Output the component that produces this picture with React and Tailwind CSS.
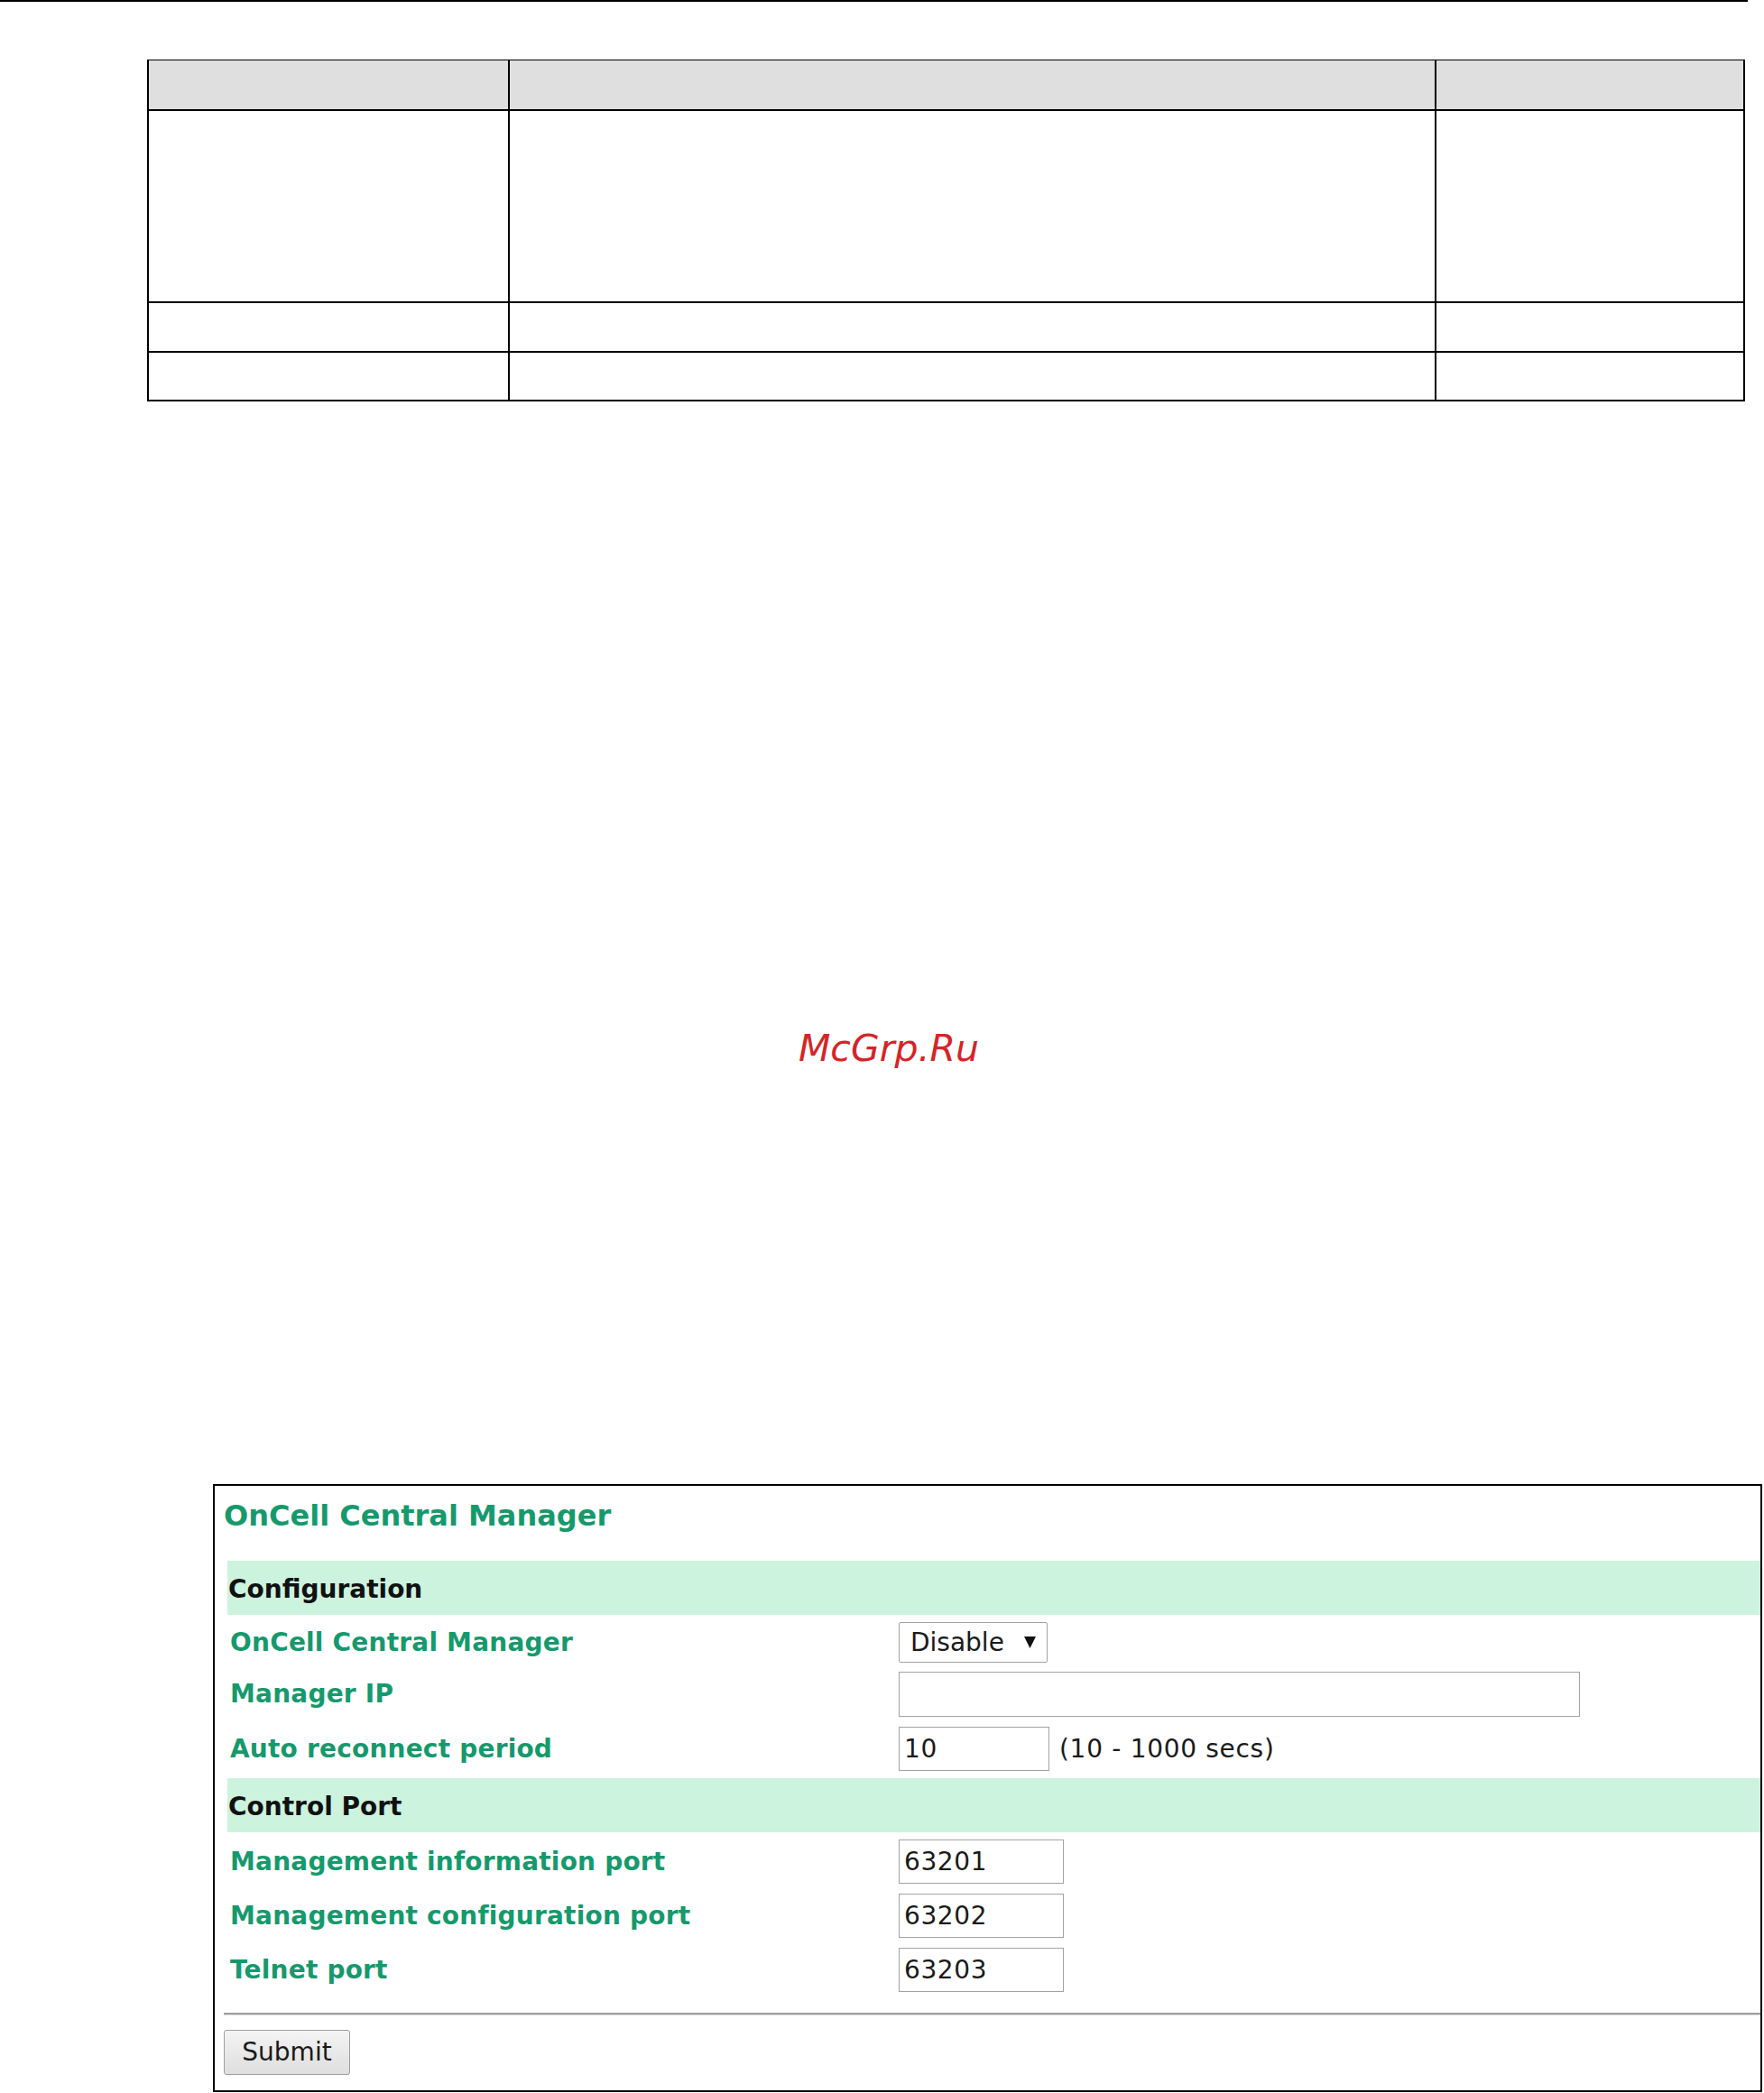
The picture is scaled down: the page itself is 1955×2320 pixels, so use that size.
const green = "text-[#16996c]";

function Row({ label, h, className = "", children }) {
  return (
    <div className={`flex items-center ${className}`} style={{ height: h }}>
      <div className={`w-[744px] pl-[3px] text-[28px] leading-none font-bold tracking-[0.2px] ${green}`}>{label}</div>
      <div className="flex items-center">{children}</div>
    </div>
  );
}

function Field({ value = "", w, h }) {
  return (
    <input
      readOnly
      value={value}
      className="border border-[#a3a3a3] bg-white pl-[5px] text-[28px] tracking-[0.6px] text-[#1a1a1a] outline-none"
      style={{ width: w, height: h }}
    />
  );
}

function Band({ children }) {
  return (
    <div className="ml-[14px] flex h-[60px] items-center bg-[#ccf3de] pl-[1px] pt-[4px] text-[28px] font-bold text-[#111]">
      {children}
    </div>
  );
}

export default function App() {
  return (
    <div className="h-[2320px] w-[1955px] overflow-hidden bg-white font-['DejaVu_Sans',sans-serif]">
      <div className="h-[2px] w-[1937px] bg-black" />

      <div className="ml-[163px] mt-[64px] w-[1771px] border-2 border-t border-black">
        <div className="flex h-[56px] border-b-2 border-black bg-[#dfdfdf]">
          <div className="w-[400px] border-r-2 border-black" />
          <div className="w-[1027px] border-r-2 border-black" />
          <div className="flex-1" />
        </div>
        <div className="flex h-[213px] border-b-2 border-black">
          <div className="w-[400px] border-r-2 border-black" />
          <div className="w-[1027px] border-r-2 border-black" />
          <div className="flex-1" />
        </div>
        <div className="flex h-[55px] border-b-2 border-black">
          <div className="w-[400px] border-r-2 border-black" />
          <div className="w-[1027px] border-r-2 border-black" />
          <div className="flex-1" />
        </div>
        <div className="flex h-[52px]">
          <div className="w-[400px] border-r-2 border-black" />
          <div className="w-[1027px] border-r-2 border-black" />
          <div className="flex-1" />
        </div>
      </div>

      <div className="mt-[693px] h-[48px] pl-[885px] text-[41px] italic leading-[48px] text-[#d52429]">
        McGrp.Ru
      </div>

      <div className="ml-[236px] mt-[459px] w-[1717px] border-2 border-black pb-[17px]">
        <div className={`ml-[10px] mt-[13px] h-[40px] text-[32px] font-bold leading-[40px] ${green}`}>
          OnCell Central Manager
        </div>

        <div className="mt-[30px]">
          <Band>Configuration</Band>
        </div>

        <div className="ml-[14px] flex flex-col pb-[8px] pt-[8px]">
          <Row label="OnCell Central Manager" h={45} className="mb-[10px]">
            <div className="flex h-[45px] w-[165px] items-center rounded-[2px] border border-[#a3a3a3] bg-white pl-[12px] text-[28px] text-[#1a1a1a]">
              <span className="leading-none">Disable</span>
              <svg className="ml-[22px]" width="13" height="13" viewBox="0 0 13 13">
                <polygon points="0,0 13,0 6.5,13" fill="#111" />
              </svg>
            </div>
          </Row>
          <Row label="Manager IP" h={50} className="mb-[11px]">
            <Field w={755} h={50} />
          </Row>
          <Row label="Auto reconnect period" h={49}>
            <Field value="10" w={167} h={49} />
            <span className="ml-[11px] text-[28px] leading-none tracking-[0.7px] text-[#1a1a1a]">(10 - 1000 secs)</span>
          </Row>
        </div>

        <Band>Control Port</Band>

        <div className="ml-[14px] flex flex-col gap-[11px] pt-[8px]">
          <Row label="Management information port" h={49}>
            <Field value="63201" w={183} h={49} />
          </Row>
          <Row label="Management configuration port" h={49}>
            <Field value="63202" w={183} h={49} />
          </Row>
          <Row label="Telnet port" h={49}>
            <Field value="63203" w={183} h={49} />
          </Row>
        </div>

        <div className="ml-[10px] mt-[23px] h-[3px] border-b border-t-2 border-b-[#dedede] border-t-[#9d9d9d]" />

        <button className="ml-[10px] mt-[16px] flex h-[50px] w-[140px] items-center justify-center rounded-[3px] border border-[#9f9f9f] bg-gradient-to-b from-[#f4f4f4] to-[#dedede] text-[28px] leading-none text-[#1a1a1a]">
          Submit
        </button>
      </div>
    </div>
  );
}
